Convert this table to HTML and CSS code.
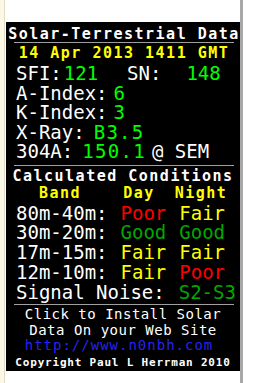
FILE: index.html
```html
<!DOCTYPE html>
<html>
<head>
<meta charset="utf-8">
<link rel="stylesheet" href="styles.css">
</head>
<body>
<div class="gutter"></div>
<div class="main">
  <div class="panel">
    <div class="title">Solar-Terrestrial Data</div>
    <div class="rule"></div>
    <div class="date">14 Apr 2013 1411 GMT</div>
    <div class="stats">
      <div class="row"><span>SFI:</span><span class="val v-sfi">121</span><span class="lbl-sn">SN:</span><span class="val v-sn">148</span></div>
      <div class="row"><span>A-Index:</span><span class="val v-idx">6</span></div>
      <div class="row"><span>K-Index:</span><span class="val v-idx">3</span></div>
      <div class="row"><span>X-Ray:</span><span class="val v-wide v-xray">B3.5</span></div>
      <div class="row"><span>304A:</span><span class="val v-wide v-304">150.1</span><span class="sem">@ SEM</span></div>
    </div>
    <div class="rule rule-mid"></div>
    <div class="calc">Calculated Conditions</div>
    <div class="heads"><span class="h-band">Band</span><span class="h-day">Day</span><span class="h-night">Night</span></div>
    <div class="bands">
      <div class="row"><span>80m-40m:</span><span class="c1 poor">Poor</span><span class="c2 fair">Fair</span></div>
      <div class="row"><span>30m-20m:</span><span class="c1 good">Good</span><span class="c2 good">Good</span></div>
      <div class="row"><span>17m-15m:</span><span class="c1 fair">Fair</span><span class="c2 fair">Fair</span></div>
      <div class="row"><span>12m-10m:</span><span class="c1 fair">Fair</span><span class="c2 poor">Poor</span></div>
      <div class="row"><span>Signal Noise:</span><span class="noise good">S2-S3</span></div>
    </div>
    <div class="rule rule-low"></div>
    <div class="install">
      <div class="line">Click to Install Solar</div>
      <div class="line">Data On your Web Site</div>
      <div class="line link">http://www.n0nbh.com</div>
    </div>
    <div class="copy">Copyright Paul L Herrman 2010</div>
  </div>
</div>
<div class="bar"></div>
</body>
</html>
```
FILE: styles.css
```css
html, body {
  margin: 0;
  padding: 0;
  height: 100%;
}
body {
  display: flex;
  background: #ffffff;
  font-family: "DejaVu Sans Mono", "Liberation Mono", monospace;
}
.gutter {
  width: 4px;
  background: #fcf8e6;
  border-right: 1px solid #e4dcc4;
  flex: none;
}
.main {
  width: 234px;
  padding: 22px 0 0 1px;
  flex: none;
}
.bar {
  width: 3px;
  background: #a8a8a8;
  flex: none;
}
.panel {
  background: #000000;
  color: #ffffff;
  height: 349px;
  box-sizing: border-box;
  padding-top: 4px;
  overflow: hidden;
}
.title, .date, .calc, .heads {
  font-size: 15px;
  line-height: 16px;
  font-weight: bold;
  letter-spacing: 1.5px;
  text-align: center;
  white-space: pre;
}
.title { padding-left: 2px; }
.date {
  color: #ffff00;
  margin-top: 2px;
  padding-left: 2px;
}
.rule {
  height: 1px;
  background: #a0a0a0;
  margin: 0 6px 0 8px;
}
.stats {
  margin-top: 3px;
  padding-left: 10px;
  font-size: 19px;
  line-height: 19.5px;
}
.row { white-space: pre; }
.val { color: #00ff00; }
.v-sfi { margin-left: 2px; }
.lbl-sn { margin-left: 29px; }
.v-sn { margin-left: 25px; }
.v-idx { margin-left: 6px; }
.v-wide { letter-spacing: 1.3px; }
.v-xray { margin-left: 9px; }
.v-304 { margin-left: 9px; }
.sem { margin-left: 6px; }
.rule-mid { margin-top: 3px; }
.calc { margin-top: 2px; }
.heads {
  color: #ffff00;
  margin-top: 1px;
  text-align: left;
  padding-left: 33px;
}
.h-day { margin-left: 42px; }
.h-night { margin-left: 20px; }
.bands {
  margin-top: 3px;
  padding-left: 10px;
  font-size: 19px;
  line-height: 19.8px;
}
.c1 { margin-left: 13px; }
.c2 { margin-left: 13px; }
.noise { margin-left: 14px; }
.poor { color: #ff0000; }
.fair { color: #ffff00; }
.good { color: #00a800; }
.rule-low { margin-top: 2px; }
.install {
  margin-top: 2px;
  font-size: 14px;
  line-height: 15.5px;
  letter-spacing: 0.5px;
  text-align: center;
}
.line { white-space: pre; }
.link {
  color: #2424f0;
  letter-spacing: 1px;
  padding-right: 8px;
}
.copy {
  margin-top: 2px;
  font-size: 11px;
  line-height: 13px;
  font-weight: bold;
  letter-spacing: 0.8px;
  text-align: center;
  white-space: pre;
}
```
